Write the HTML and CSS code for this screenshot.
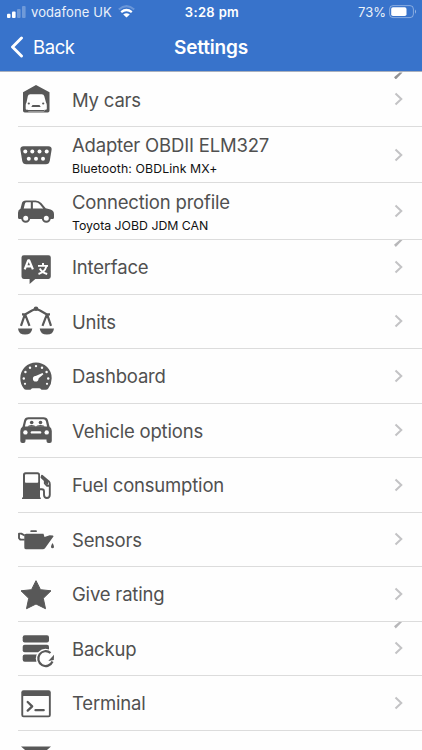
FILE: index.html
```html
<!DOCTYPE html>
<html lang="en">
<head>
<meta charset="utf-8">
<title>Settings</title>
<link rel="stylesheet" href="styles.css">
</head>
<body>
<header class="header">
  <div class="status">
    <div class="carrier">
      <svg class="signal" width="19" height="12" viewBox="0 0 19 12"><rect x="0" y="7.7" width="3.5" height="4.3" rx="1"/><rect x="5" y="5.5" width="3.6" height="6.5" rx="1"/><g opacity=".28"><rect x="10" y="3" width="3.6" height="9" rx="1"/><rect x="15" y="0" width="3.6" height="12" rx="1"/></g></svg>
      <span class="network">vodafone UK</span>
      <svg class="wifi" width="17" height="13" viewBox="0 0 17 13"><path d="M8.500 12.500 5.200 9.500Q8.500 7 11.800 9.500Z"/><path d="M3.200 7.200Q8.500 2.900 13.800 7.200" fill="none" stroke="#fff" stroke-width="2.300"/><path d="M.8 4.500Q8.500-2.300 16.200 4.500" fill="none" stroke="#fff" stroke-width="2" opacity=".25"/></svg>
    </div>
    <span class="time">3:28 pm</span>
    <div class="power">
      <span class="percent">73%</span>
      <svg class="battery" width="28" height="14" viewBox="0 0 28 14"><rect x=".6" y=".6" width="23.8" height="12" rx="3.400" fill="none" stroke="#fff" stroke-opacity=".4"/><rect x="2.200" y="2.300" width="15.300" height="8.700" rx="1.800"/><path d="M26 4.500q2 2 0 4.300z" opacity=".5"/></svg>
    </div>
  </div>
  <nav class="nav">
    <a class="back"><svg width="14" height="22" viewBox="0 0 14 22"><path d="M11.500 2 2.500 11l9 9" fill="none" stroke="#fff" stroke-width="2.900" stroke-linecap="round" stroke-linejoin="round"/></svg><span class="back-label">Back</span></a>
    <h1 class="title">Settings</h1>
  </nav>
</header>
<main class="list">
  <div class="row clipped first">
    <svg class="icon" viewBox="0 0 36 36"><path d="M5 11.200 18 4l13.500 7.200v18.600q0 1.800-1.800 1.800H6.800Q5 31.600 5 29.800Z"/><path class="paper" d="M12.200 13.200h11.600q2 0 2.500 2l1.700 6.300q.8 1.200.8 2.800v3.500q0 1-1 1h-1.300v1q0 .8-.8.800H10.800q-.8 0-.8-.8v-1H8.700q-1 0-1-1v-3.500q0-1.600.8-2.800l1.300-6.300q.4-2 2.400-2Z"/><circle cx="10.800" cy="22.500" r="1.100"/><circle cx="25.200" cy="22.500" r="1.100"/><path d="M14.500 24h7l1.200 1.900h-9.400zM9.800 29h16.500v1.200H9.800z"/></svg>
    <div class="text"><span class="name">My cars</span></div>
    <svg class="chevron" viewBox="0 0 9 14"><path d="m1.500 1.500 5.800 5.500-5.800 5.500"/></svg>
  </div>
  <div class="row tall">
    <svg class="icon" viewBox="0 0 36 36"><path d="M5.600 9.200h24.800q3.600 0 3.200 3.600l-1.800 11q-.6 3.500-4 3.500H8.200q-3.400 0-4-3.500l-1.800-11Q2 9.200 5.600 9.200Z"/><g class="paper"><circle cx="7.300" cy="14.600" r="2"/><circle cx="14.300" cy="14.600" r="2"/><circle cx="21.500" cy="14.600" r="2"/><circle cx="28.700" cy="14.600" r="2"/><circle cx="10.800" cy="21.800" r="2"/><circle cx="18" cy="21.800" r="2"/><circle cx="25" cy="21.800" r="2"/></g></svg>
    <div class="text"><span class="name">Adapter OBDII ELM327</span><span class="detail">Bluetooth: OBDLink MX+</span></div>
    <svg class="chevron" viewBox="0 0 9 14"><path d="m1.500 1.500 5.800 5.500-5.800 5.500"/></svg>
  </div>
  <div class="row tall">
    <svg class="icon" viewBox="0 0 36 36"><path d="M8 7.500h9.500q3.500 0 5.800 2.600l4.400 5.200 4.800 1.200q3.500 1 3.500 4.700v3.300q0 1.500-1.500 1.500h-33Q0 26 0 24.500v-4.700q0-3 2.500-4l1.400-5.500Q4.600 7.500 8 7.500Z"/><path class="paper" d="M8.300 9.300h4.500v6.200H5.700l1-4q.4-2.200 1.600-2.200ZM14.900 9.300h2.600q2.600 0 4.200 1.900l3.500 4.300H14.900z"/><g class="ring"><circle cx="7.700" cy="25.300" r="3.500"/><circle cx="28.300" cy="25.300" r="3.500"/></g></svg>
    <div class="text"><span class="name">Connection profile</span><span class="detail tight">Toyota JOBD JDM CAN</span></div>
    <svg class="chevron" viewBox="0 0 9 14"><path d="m1.500 1.500 5.800 5.500-5.800 5.500"/></svg>
  </div>
  <div class="row clipped">
    <svg class="icon" viewBox="0 0 36 36"><path d="M5.800 6.300h24.700q2.300 0 2.300 2.300v19q0 2.300-2.300 2.300H17.300l-5.700 5v-5H5.800q-2.300 0-2.300-2.300v-19q0-2.300 2.300-2.300Z"/><g class="lines white"><path d="m6.700 20.300 3.500-9h1l3.700 9M8.100 17.300h5.400" stroke-width="2.200"/><path d="M20 16.900h10M25 14v2.900M21.800 19.500q2 4 7.400 5.500M28.300 17.500q-1.500 5.500-7.800 7.500" stroke-width="1.900"/></g></svg>
    <div class="text"><span class="name">Interface</span></div>
    <svg class="chevron" viewBox="0 0 9 14"><path d="m1.500 1.500 5.800 5.500-5.800 5.500"/></svg>
  </div>
  <div class="row">
    <svg class="icon" viewBox="0 0 36 36"><path d="M0 25.400h14.300q-.8 6.200-7.200 6.200T0 25.400ZM21.700 25.400H36q-.7 6.200-7.100 6.200t-7.200-6.200Z"/><circle cx="18" cy="5.800" r="2.300"/><path class="lines" d="M4 11.300h3.500L14 7.500l4-1.700 4 1.700 6.500 3.800H32M6.800 11.600 3 22.800M7.200 11.600l4.300 11.200M28.800 11.600l-4.300 11.200M29.200 11.600 33 22.800" stroke-width="2.200"/></svg>
    <div class="text"><span class="name">Units</span></div>
    <svg class="chevron" viewBox="0 0 9 14"><path d="m1.500 1.500 5.800 5.500-5.800 5.500"/></svg>
  </div>
  <div class="row">
    <svg class="icon" viewBox="0 0 36 36"><path d="M18 4.500a15.700 15.700 0 0 1 15.700 15.700q0 5.500-3.300 10.100-1 1.500-2.800 1.500h-3.200q-1 0-1.600-.9-.5-.6-1.500-.6h-6.600q-1 0-1.500.6-.6.9-1.600.9H8.400q-1.800 0-2.800-1.500-3.300-4.600-3.300-10.100A15.700 15.700 0 0 1 18 4.500Z"/><g class="paper"><circle cx="5.800" cy="20.500" r="1.200"/><circle cx="7.400" cy="14" r="1.200"/><circle cx="12" cy="9.700" r="1.200"/><circle cx="18" cy="8.100" r="1.200"/><circle cx="24" cy="9.700" r="1.200"/><circle cx="28.600" cy="14" r="1.200"/><circle cx="30.200" cy="20.500" r="1.200"/><circle cx="7" cy="25.800" r="1.100"/><circle cx="29" cy="25.800" r="1.100"/><circle cx="17.700" cy="20.700" r="2.800"/><path d="m16.500 18.500 8-3.600.9 1.400-6.400 5.500z"/></g></svg>
    <div class="text"><span class="name">Dashboard</span></div>
    <svg class="chevron" viewBox="0 0 9 14"><path d="m1.500 1.500 5.800 5.500-5.800 5.500"/></svg>
  </div>
  <div class="row">
    <svg class="icon" viewBox="0 0 36 36"><path d="M10.500 5.200h15q3.700 0 4.500 3.300l1.500 6q2.300 1.700 2.300 4.500v10q0 2-2 2h-1.300q-2 0-2-2v-1.500h-21V29q0 2-2 2H4.300q-2 0-2-2V19q0-2.800 2.300-4.500l1.500-6q.8-3.300 4.400-3.300Z"/><path class="paper" d="M10.700 7.200h14.600q2.100 0 2.600 2l1.200 5.300H6.900l1.200-5.300q.5-2 2.600-2Z"/><path d="M9.500 14.800q.6-1.700 4-1.700t4.500 1.700q.6-1.700 4.500-1.700t4 1.700z"/><circle cx="13.700" cy="10.500" r="1.800"/><circle cx="22.500" cy="10.500" r="1.800"/><g class="paper"><circle cx="7.400" cy="20.400" r="2.200"/><circle cx="28.700" cy="20.400" r="2.200"/><rect x="12.700" y="19.200" width="10.600" height="2.400" rx="1.200"/></g></svg>
    <div class="text"><span class="name">Vehicle options</span></div>
    <svg class="chevron" viewBox="0 0 9 14"><path d="m1.500 1.500 5.800 5.500-5.800 5.500"/></svg>
  </div>
  <div class="row">
    <svg class="icon" viewBox="0 0 36 36"><path d="M7.500 5.300h12q2.500 0 2.500 2.500v22.600h.8V32H4v-1.600h1V7.800q0-2.500 2.500-2.500Z"/><rect class="paper" x="7" y="7.200" width="13.200" height="8.500" rx=".8"/><path class="lines" d="M22 22.300h1.800q2.200 0 2.200 2.200v3.300q0 3.200 2.900 3.200t2.900-3.200V17.200q0-1.700-1-2.800L24 8.700l-.5 1.600 3.300 3.300v2.800l2.300 2.400h2.700" stroke-width="1.900"/><path d="m23.500 9 6.500 5v4l-3-2v-3l-3.500-2z"/></svg>
    <div class="text"><span class="name">Fuel consumption</span></div>
    <svg class="chevron" viewBox="0 0 9 14"><path d="m1.500 1.500 5.800 5.500-5.800 5.500"/></svg>
  </div>
  <div class="row">
    <svg class="icon" viewBox="0 0 36 36"><rect x="12.300" y="9.200" width="6.600" height="1.900" rx=".9"/><path d="M8.200 12.800h17.300l1 3.300 5.200-1.800 3.200.2.700.8L27.200 27q-.9 1.300-2.500 1.300H8.200q-1.900 0-1.900-1.900V14.700q0-1.900 1.900-1.900ZM34.500 22q1.500 2.400 1.500 3.700 0 1.600-1.500 1.600T33 25.700q0-1.300 1.500-3.700Z"/><path class="lines" d="M6.700 14.500 3.300 12.600H1v4.500l1.300 1.500h4.400" stroke-width="1.900"/></svg>
    <div class="text"><span class="name">Sensors</span></div>
    <svg class="chevron" viewBox="0 0 9 14"><path d="m1.500 1.500 5.800 5.500-5.800 5.500"/></svg>
  </div>
  <div class="row">
    <svg class="icon" viewBox="0 0 36 36"><path d="m18 4.700 4.500 9 10.500 1.100-7.700 7.500 2.200 10.400L18 28l-9.500 4.700 2.200-10.400L3 14.800l10.500-1.100Z" stroke="#585858" stroke-linejoin="round"/></svg>
    <div class="text"><span class="name">Give rating</span></div>
    <svg class="chevron" viewBox="0 0 9 14"><path d="m1.500 1.500 5.800 5.500-5.800 5.500"/></svg>
  </div>
  <div class="row clipped">
    <svg class="icon" viewBox="0 0 36 36"><rect x="4.700" y="5.200" width="26.300" height="7.400" rx="2"/><rect x="4.700" y="14.800" width="26.300" height="7.400" rx="2"/><rect x="4.700" y="24.400" width="26.300" height="7.400" rx="2"/><circle class="paper" cx="27.500" cy="28.500" r="9.700"/><path class="lines" d="M32.500 23a7.400 7.400 0 1 0 2 8.500" stroke-width="2.200"/><path d="m30.300 31 5.500-.9.200-5.300z"/></svg>
    <div class="text"><span class="name">Backup</span></div>
    <svg class="chevron" viewBox="0 0 9 14"><path d="m1.500 1.500 5.800 5.500-5.800 5.500"/></svg>
  </div>
  <div class="row">
    <svg class="icon" viewBox="0 0 36 36"><rect x="3.300" y="5.300" width="29.500" height="27" rx="2.200"/><rect class="paper" x="5.200" y="11" width="25.700" height="19.500" rx=".5"/><path class="lines" d="m9.700 17 4.500 4.300-4.500 4.300M17.500 25.200h8.200" stroke-width="2.300" stroke-linecap="round"/></svg>
    <div class="text"><span class="name">Terminal</span></div>
    <svg class="chevron" viewBox="0 0 9 14"><path d="m1.500 1.500 5.800 5.500-5.800 5.500"/></svg>
  </div>
  <div class="row last">
    <svg class="icon" viewBox="0 0 36 36"><path d="M3 7.500h30L18 20.500zM3 12l15 13 15-13v16H3z"/></svg>
  </div>
</main>
</body>
</html>
```
FILE: styles.css
```css
* { box-sizing: border-box; }
body {
  margin: 0;
  height: 750px;
  overflow: hidden;
  background: #fefefe;
  font-family: Inter, "Liberation Sans", sans-serif;
  display: flex;
  flex-direction: column;
}
svg { display: block; flex: none; }
.header {
  height: 72.4px;
  flex: none;
  background: #3873cb;
  color: #fff;
  border-bottom: 1px solid #a9b0bd;
}
.header svg { fill: #fff; }
.status {
  height: 23px;
  display: grid;
  grid-template-columns: 1fr auto 1fr;
  align-items: center;
  padding: 0 5px 0 7px;
  font-size: 13px;
}
.carrier, .power { display: flex; align-items: center; }
.signal { margin-right: 5px; }
.network { letter-spacing: 0.1px; opacity: 0.9; }
.wifi { margin-left: 6px; }
.time { font-weight: 600; letter-spacing: 0.35px; }
.power { justify-content: flex-end; gap: 3px; }
.percent { opacity: 0.9; }
.nav {
  height: 48px;
  display: grid;
  grid-template-columns: 1fr auto 1fr;
  align-items: center;
  padding: 0 10px;
}
.back { display: flex; align-items: center; gap: 9px; font-size: 18.5px; letter-spacing: -0.4px; }
.title { margin: 0; font-size: 19px; font-weight: 600; letter-spacing: -0.15px; }
.list { flex: none; }
.row {
  height: 54.5px;
  margin-left: 18px;
  padding-right: 18px;
  display: flex;
  align-items: center;
  border-bottom: 1px solid #dcdcdc;
  position: relative;
}
.row.tall { height: 56.6px; }
.icon { width: 36px; height: 36px; fill: #585858; overflow: visible; }
.paper { fill: #fefefe; }
.lines { fill: none; stroke: #585858; stroke-linejoin: round; }
.lines.white { stroke: #fefefe; }
.ring { stroke: #585858; stroke-width: 2; fill: #fefefe; }
.text { flex: 1; margin-left: 18px; padding-top: 1px; display: flex; flex-direction: column; }
.name { font-size: 18.5px; line-height: 24px; color: #505050; letter-spacing: -0.19px; }
.detail { font-size: 12.3px; line-height: 18px; margin-top: 3px; color: #111; letter-spacing: 0.1px; }
.detail.tight { letter-spacing: 0; }
.tall .text { padding-top: 2px; }
.chevron { width: 9px; height: 14px; margin-right: 1px; }
.chevron path { fill: none; stroke: #c3c3c5; stroke-width: 2; }
/* Sliver of the section chevron at the top of a group */
.clipped::before {
  content: "";
  position: absolute;
  top: 0;
  right: 19px;
  width: 9px;
  height: 7px;
  background: #b7b7b9;
  clip-path: polygon(0 68%, 62% 0, 95% 0, 20% 100%);
}
.first::before { background: #929294; }
```
